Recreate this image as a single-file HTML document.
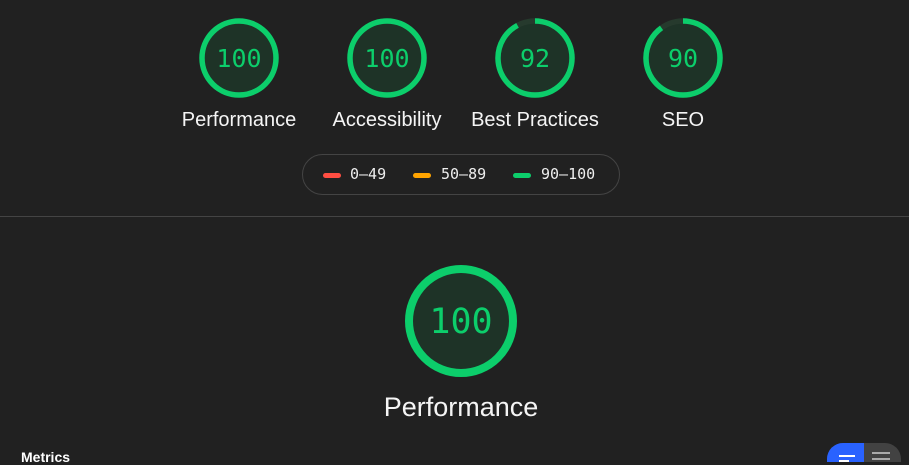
<!DOCTYPE html>
<html><head><style>
body{margin:0;width:909px;height:462px;background:#212121;overflow:hidden;font-family:"Liberation Sans",sans-serif;color:#fff;position:relative}
.lab{position:absolute;width:180px;text-align:center;font-size:20px;color:#f5f5f5}
.num{font-family:"DejaVu Sans Mono",monospace;fill:#0cce6b}
.legend{position:absolute;left:302px;top:154px;width:318px;height:41px;border:1px solid #444;border-radius:21px;box-sizing:border-box;font-family:"DejaVu Sans Mono",monospace;font-size:15px;color:#eee}
.legend span{position:absolute;top:10px}
.legend i{position:absolute;top:18px;width:18px;height:5px;border-radius:3px}
</style></head><body>
<svg width="909" height="462" style="position:absolute;left:0;top:0">
<g fill="#1e3327" stroke="#0cce6b" stroke-width="5.5">
<circle cx="239" cy="58" r="37"/>
<circle cx="387" cy="58" r="37"/>
<circle cx="535" cy="58" r="37" stroke="#263a2d"/>
<circle cx="683" cy="58" r="37" stroke="#263a2d"/>
<circle cx="535" cy="58" r="37" fill="none" stroke-dasharray="213.9 300" transform="rotate(-90 535 58)"/>
<circle cx="683" cy="58" r="37" fill="none" stroke-dasharray="209.2 300" transform="rotate(-90 683 58)"/>
<circle cx="461" cy="321" r="52" stroke-width="8"/>
</g>
<g class="num" text-anchor="middle">
<text x="239" y="67" font-size="25">100</text>
<text x="387" y="67" font-size="25">100</text>
<text x="535" y="67" font-size="25">92</text>
<text x="683" y="67" font-size="25">90</text>
<text x="461" y="333" font-size="35">100</text>
</g>
<line x1="0" y1="216.5" x2="909" y2="216.5" stroke="#444"/>
<rect x="827" y="443" width="74" height="40" rx="16" fill="#424242"/>
<path d="M843 443h21v40h-21a16 16 0 0 1-16-16v-8a16 16 0 0 1 16-16z" fill="#2962ff"/>
<rect x="839" y="455" width="16" height="2" fill="#fff"/>
<rect x="839" y="460" width="10" height="2" fill="#fff"/>
<rect x="872" y="452" width="18" height="2" fill="#aaa"/>
<rect x="872" y="458" width="18" height="2" fill="#aaa"/>
</svg>
<div class="lab" style="left:149px;top:109px">Performance</div>
<div class="lab" style="left:297px;top:109px">Accessibility</div>
<div class="lab" style="left:445px;top:109px">Best Practices</div>
<div class="lab" style="left:593px;top:109px">SEO</div>
<div class="legend">
<i style="left:20px;background:#ff4e42"></i><span style="left:47px">0–49</span>
<i style="left:110px;background:#ffa400"></i><span style="left:138px">50–89</span>
<i style="left:210px;background:#0cce6b"></i><span style="left:238px">90–100</span>
</div>
<div class="lab" style="left:336px;top:392px;width:250px;font-size:27px">Performance</div>
<div style="position:absolute;left:21px;top:449px;font-size:14px;font-weight:bold">Metrics</div>
</body></html>
